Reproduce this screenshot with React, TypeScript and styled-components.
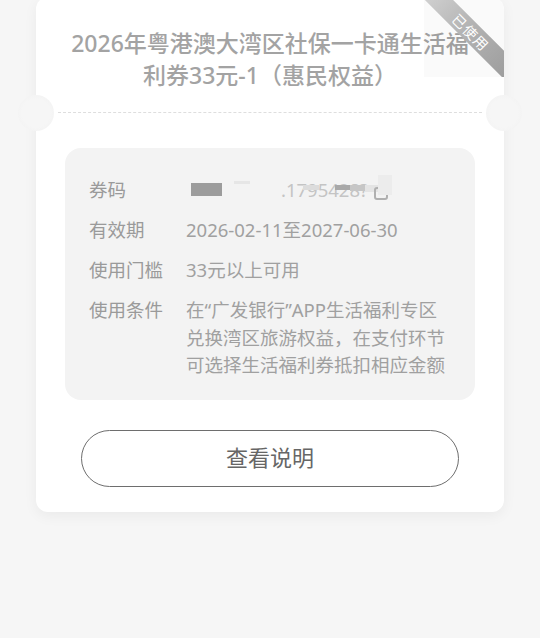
import styled, { createGlobalStyle } from "styled-components";

const GlobalStyle = createGlobalStyle`
  html, body {
    margin: 0;
    padding: 0;
    background: #f6f6f6;
  }
  body {
    font-family: "Noto Sans", "Noto Sans CJK SC", sans-serif;
  }
`;

const Page = styled.div`
  min-height: 638px;
  padding: 0 36px;
  box-sizing: border-box;
`;

const Card = styled.div`
  position: relative;
  margin-top: -3px;
  background: #fff;
  border-radius: 12px;
  padding: 30px 0 25px;
  box-shadow: 0 4px 14px rgba(0, 0, 0, 0.05);
  display: flex;
  flex-direction: column;

  /* ticket notches */
  &::before,
  &::after {
    content: "";
    position: absolute;
    top: 98px;
    width: 36px;
    height: 36px;
    border-radius: 50%;
    background: radial-gradient(circle at center, #f6f6f6 55%, #f0f0f0 100%);
  }
  &::before {
    left: -18px;
  }
  &::after {
    right: -18px;
  }
`;

const Title = styled.div`
  text-align: center;
  white-space: nowrap;
  font-size: 23px;
  line-height: 32px;
  font-weight: 500;
  color: #a3a3a3;
`;

const Divider = styled.div`
  margin: 21px 22px 0;
  border-top: 1px dashed #dedede;
`;

const Stamp = styled.div`
  position: absolute;
  top: 0;
  right: 0;
  width: 80px;
  height: 80px;
  overflow: hidden;
  border-top-right-radius: 12px;
  background: rgba(0, 0, 0, 0.018);
`;

const Band = styled.div`
  position: absolute;
  left: -20px;
  top: 25px;
  width: 134px;
  height: 20px;
  transform: rotate(45deg);
  background: linear-gradient(90deg, #d6d6d6 0%, #b4b4b4 45%, #999 100%);
  color: #fff;
  font-family: "Noto Sans CJK SC", sans-serif;
  font-size: 14px;
  line-height: 20px;
  text-align: center;
  letter-spacing: 1px;
`;

const Panel = styled.div`
  margin: 35px 29px 0;
  padding: 28px 26px 21px 24px;
  background: #f3f3f3;
  border-radius: 16px;
  display: flex;
  flex-direction: column;
  gap: 12.5px;
`;

const Row = styled.div`
  display: grid;
  grid-template-columns: 97px 1fr;
  font-size: 18.5px;
  line-height: 27.5px;
  color: #999;
`;

const Label = styled.div`
  color: #9a9a9a;
`;

const Value = styled.div`
  color: #a0a0a0;
`;

const CodeValue = styled.div`
  display: flex;
  align-items: center;
  height: 27.5px;
`;

const DarkBlock = styled.span`
  width: 31px;
  height: 13px;
  margin-left: 5px;
  background: #9c9c9c;
`;

const Speck = styled.span`
  align-self: flex-start;
  width: 16px;
  height: 3px;
  margin: 5px 0 0 12px;
  background: #e6e6e6;
`;

const CodeText = styled.span`
  position: relative;
  margin-left: 31px;
  color: #c4c4c4;
`;

const Mask = styled.span<{ $x: number; $w: number; $h: number; $c: string }>`
  position: absolute;
  left: ${(p) => p.$x}px;
  top: 9px;
  width: ${(p) => p.$w}px;
  height: ${(p) => p.$h}px;
  background: ${(p) => p.$c};
`;

const CopyIcon = styled.span`
  position: relative;
  width: 10px;
  height: 9px;
  margin: 8px 0 0 6px;
  border: 2px solid #b0b0b0;
  border-radius: 3px;

  &::after {
    content: "";
    position: absolute;
    left: 2px;
    top: -14px;
    width: 14px;
    height: 20px;
    background: #ececec;
  }
`;

const Button = styled.button`
  margin: 30px 45px 0;
  height: 57px;
  padding: 0 0 5px;
  display: flex;
  align-items: center;
  justify-content: center;
  border: 1px solid #6e6e6e;
  border-radius: 29px;
  background: #fff;
  font-family: "Noto Sans CJK SC", sans-serif;
  font-size: 22px;
  line-height: 1;
  color: #666;
  cursor: pointer;
`;

const rows = [
  { label: "有效期", value: "2026-02-11至2027-06-30" },
  { label: "使用门槛", value: "33元以上可用" },
  {
    label: "使用条件",
    value: "在“广发银行”APP生活福利专区兑换湾区旅游权益，在支付环节可选择生活福利券抵扣相应金额",
  },
];

export default function App() {
  return (
    <>
      <GlobalStyle />
      <Page>
        <Card>
          <Title>
            2026年粤港澳大湾区社保一卡通生活福
            <br />
            利券33元-1（惠民权益）
          </Title>
          <Stamp>
            <Band>已使用</Band>
          </Stamp>
          <Divider />
          <Panel>
            <Row>
              <Label>券码</Label>
              <CodeValue>
                <DarkBlock />
                <Speck />
                <CodeText>
                  .1795428?
                  <Mask $x={22} $w={16} $h={5} $c="#dcdcdc" />
                  <Mask $x={54} $w={15} $h={5} $c="#a8a8a8" />
                  <Mask $x={69} $w={15} $h={6} $c="#c6c6c6" />
                  <Mask $x={84} $w={16} $h={7} $c="#e4e4e4" />
                </CodeText>
                <CopyIcon />
              </CodeValue>
            </Row>
            {rows.map((r) => (
              <Row key={r.label}>
                <Label>{r.label}</Label>
                <Value>{r.value}</Value>
              </Row>
            ))}
          </Panel>
          <Button>查看说明</Button>
        </Card>
      </Page>
    </>
  );
}
